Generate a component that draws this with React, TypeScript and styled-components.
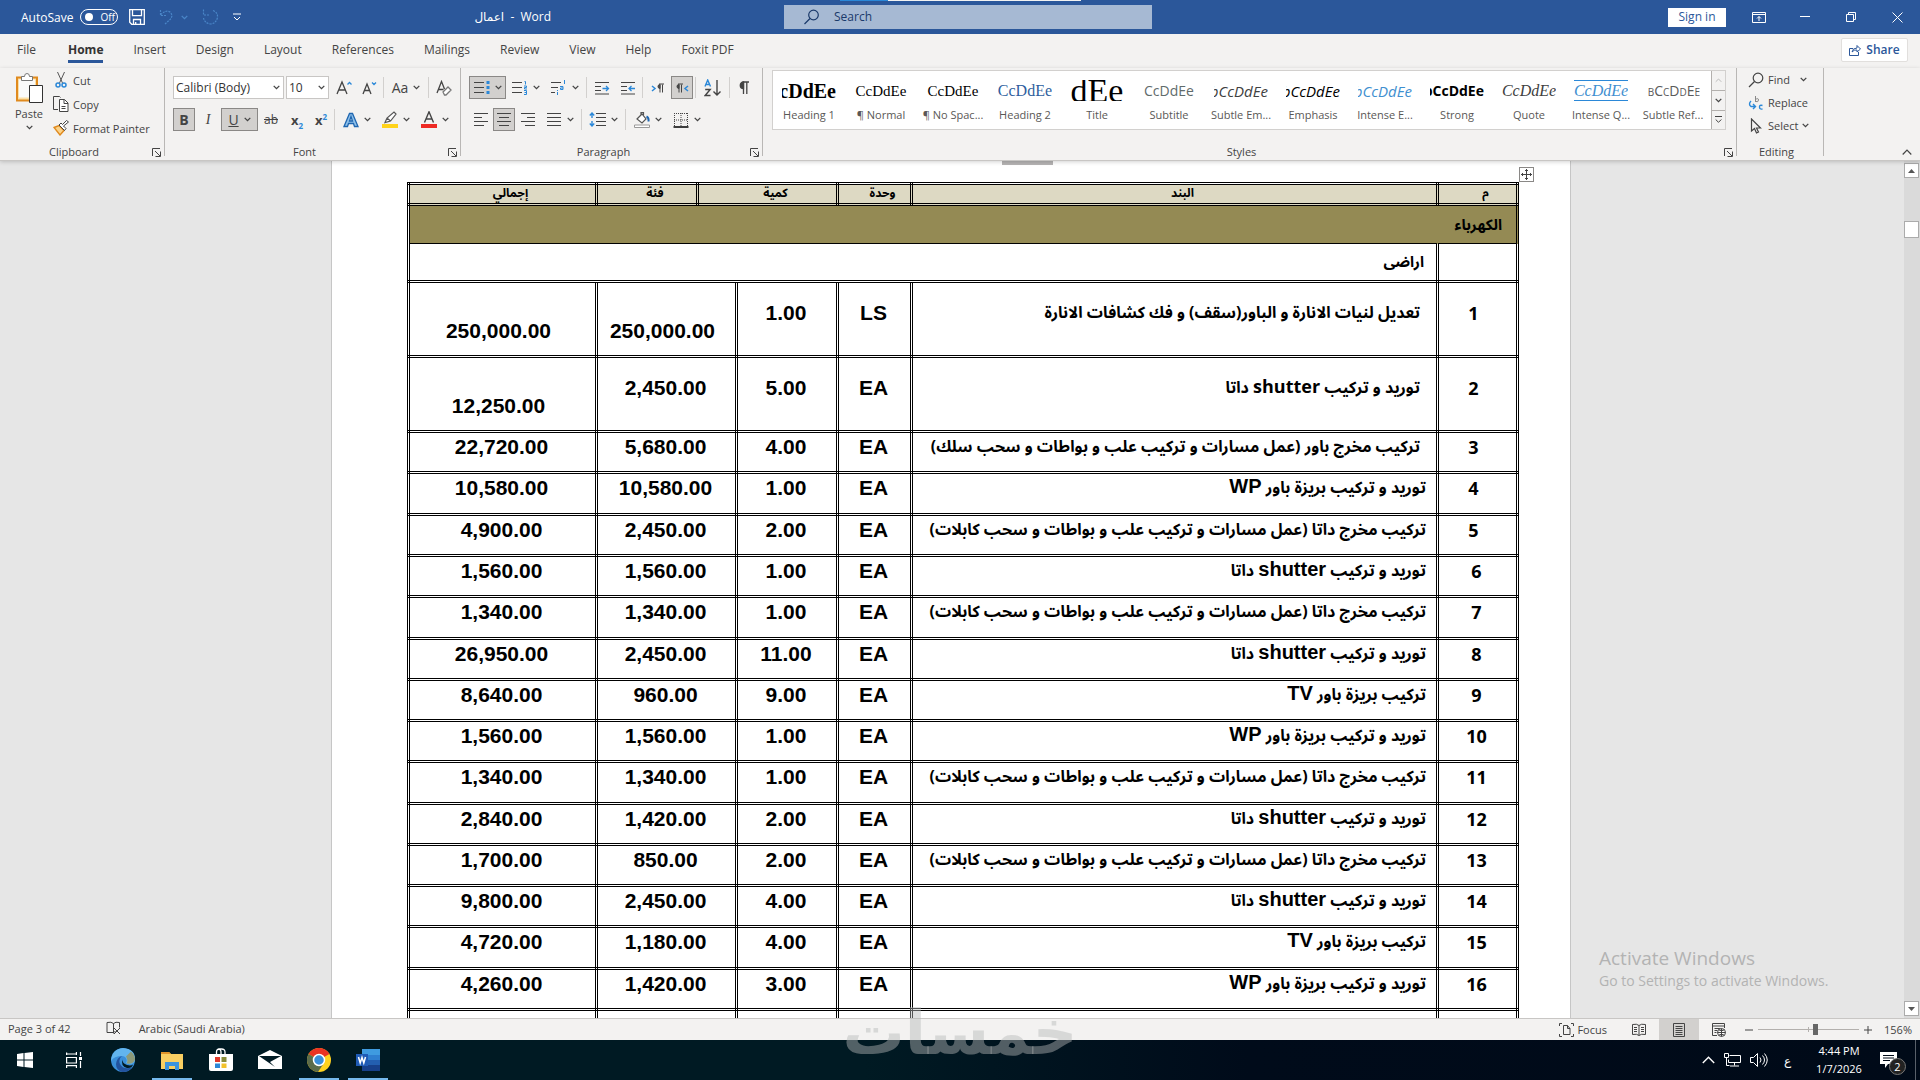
import React from 'react';
import styled, { createGlobalStyle } from 'styled-components';

const ui = '"Open Sans", "Noto Sans", "DejaVu Sans", sans-serif';
const blue = '#2b579a';
const ink = '#444444';
const accent = '#2b88d8';

const Global = createGlobalStyle`
  *, *::before, *::after { box-sizing: border-box; }
  html, body { margin: 0; height: 100%; }
  body { overflow: hidden; font-family: ${ui}; font-size: 11px; color: ${ink}; }
  button, select, input { font: inherit; color: inherit; margin: 0; }
  button { border: 0; background: none; padding: 0; }
  svg { display: block; flex: none; }
`;

const Shell = styled.div`
  position: relative;
  display: flex;
  flex-direction: column;
  height: 100vh;
  background: #f3f2f1;
`;

/* ---------- icons ---------- */
type IconProps = { w?: number; h?: number; c?: string; sw?: number; children: React.ReactNode };
const Icon = ({ w = 16, h = 16, c = ink, sw = 1, children }: IconProps) => (
  <svg width={w} height={h} viewBox={`0 0 ${w} ${h}`} fill="none" stroke={c} strokeWidth={sw} aria-hidden="true">
    {children}
  </svg>
);
const Chevron = ({ c = ink }: { c?: string }) => (
  <Icon w={7} h={5} c={c} sw={1.3}><path d="M.7.9 3.5 3.6 6.3.9" /></Icon>
);
const Launcher = () => (
  <Icon w={9} h={9}><path d="M.5 8V.5H8M3 3l5 5M8.500 3.500v5h-5" /></Icon>
);

/* ---------- title bar ---------- */
const TitleBar = styled.header`
  display: grid;
  grid-template-columns: 1fr 368px 1fr;
  align-items: center;
  flex: none;
  height: 34px;
  padding-left: 16px;
  background: ${blue};
  color: #fff;
`;
const TitleLeft = styled.div`
  display: flex;
  align-items: center;
  padding-left: 5px;
  height: 32px;
`;
const AutoSave = styled.label`
  display: flex;
  align-items: center;
  gap: 7px;
  font-size: 12px;
  margin-right: 11px;
`;
const Toggle = styled.button`
  display: flex;
  align-items: center;
  gap: 7px;
  width: 38px;
  height: 16px;
  padding-left: 4px;
  border: 1px solid #fff;
  border-radius: 8px;
  font-size: 10px;
  line-height: 14px;
  &::before { content: ''; width: 8px; height: 8px; border-radius: 4px; background: #fff; }
`;
const Quick = styled.div`
  display: flex;
  align-items: center;
  gap: 14px;
`;
const Pair = styled.button`
  display: flex;
  align-items: center;
  gap: 7px;
`;
const DocTitle = styled.h1`
  flex: 1;
  margin: 0;
  padding-bottom: 2px;
  text-align: center;
  font-size: 12px;
  font-weight: 400;
  white-space: pre;
`;
const Search = styled.label`
  display: flex;
  align-items: center;
  gap: 14px;
  height: 24px;
  padding-left: 20px;
  background: #a6b9d3;
  color: #1b3a6b;
`;
const SearchInput = styled.input`
  flex: 1;
  min-width: 0;
  border: 0;
  outline: 0;
  padding: 0 0 2px;
  background: none;
  font-size: 12px;
  &::placeholder { color: #1b3a6b; opacity: 1; }
`;
const TitleRight = styled.div`
  display: flex;
  align-items: center;
  justify-content: flex-end;
  height: 32px;
`;
const SignIn = styled.button`
  width: 58px;
  height: 19px;
  margin-right: 10px;
  background: #fff;
  color: ${blue};
  font-size: 12px;
  line-height: 18px;
`;
const WinButton = styled.button`
  display: grid;
  place-items: center;
  width: 46px;
  height: 32px;
`;
const TopEdge = styled.div`
  position: absolute;
  top: 0;
  left: 840px;
  width: 241px;
  height: 1px;
  background: linear-gradient(90deg, #2b88d8 48px, #f3f2f1 48px);
`;

/* ---------- ribbon ---------- */
const TabBar = styled.nav`
  display: flex;
  align-items: center;
  flex: none;
  height: 34px;
  padding: 0 24px 0 2px;
`;
const Tab = styled.a<{ $on?: boolean }>`
  position: relative;
  height: 32px;
  padding: 0 15px;
  line-height: 30px;
  font-size: 12px;
  color: ${(p) => (p.$on ? '#333' : ink)};
  font-weight: ${(p) => (p.$on ? 700 : 400)};
  text-decoration: none;
  &::after {
    content: '';
    position: absolute;
    left: 15px;
    right: 15px;
    bottom: 4px;
    height: 3px;
    background: ${(p) => (p.$on ? blue : 'transparent')};
  }
  &:nth-child(1) { margin-right: 2px; }
`;
const Share = styled.button`
  display: flex;
  align-items: center;
  justify-content: center;
  gap: 5px;
  width: 67px;
  height: 24px;
  margin: 0 -12px 2px auto;
  border: 1px solid #e1dfdd;
  border-radius: 2px;
  background: #fff;
  color: ${blue};
  font-size: 12px;
  font-weight: 600;
  line-height: 20px;
`;
const Ribbon = styled.div`
  position: relative;
  z-index: 1;
  display: flex;
  flex: none;
  height: 93px;
  border-bottom: 1px solid #c8c6c4;
  box-shadow: 0 1px 4px rgba(0, 0, 0, 0.18);
  background: #f3f2f1;
`;
const Group = styled.section<{ $w?: number }>`
  display: flex;
  flex-direction: column;
  flex: ${(p) => (p.$w ? `0 0 ${p.$w}px` : '1 1 0')};
  min-width: 0;
  height: 88px;
  padding-left: 8px;
  border-right: 1px solid #b9b7b5;
`;
const GroupFoot = styled.div`
  display: flex;
  align-items: center;
  height: 16px;
  margin: auto 0 -4px -8px;
  padding-right: 3px;
  font-size: 11px;
  line-height: 16px;
  & > span { flex: 1; padding-right: 4px; text-align: center; }
`;
const Rows = styled.div`
  display: grid;
  gap: 9px;
  padding-top: 8px;
`;
const Row = styled.div`
  display: flex;
  align-items: center;
  height: 23px;
`;
const Tool = styled.button<{ $w: number; $on?: boolean }>`
  display: flex;
  align-items: center;
  justify-content: center;
  gap: 5px;
  flex: none;
  width: ${(p) => p.$w}px;
  height: 23px;
  border: 1px solid ${(p) => (p.$on ? '#8a8886' : 'transparent')};
  background: ${(p) => (p.$on ? '#d2d0ce' : 'none')};
  font-size: 14px;
  line-height: 20px;
`;
const Serif = styled.i`
  font-family: "Liberation Serif", serif;
`;
const Strike = styled.s`
  font-size: 12px;
`;
const Script = styled.span`
  font-size: 13px;
  line-height: 16px;
  white-space: nowrap;
  sub, sup { font-size: 8px; color: ${accent}; font-weight: 700; line-height: 0; }
`;
const Rule = styled.span`
  flex: none;
  width: 1px;
  height: 21px;
  margin: 0 2px;
  background: #d2d0ce;
`;
const Combo = styled.label<{ $w: number }>`
  display: flex;
  align-items: center;
  width: ${(p) => p.$w}px;
  height: 23px;
  margin-right: 2px;
  padding-right: 3px;
  border: 1px solid #c8c6c4;
  background: #fff;
`;
const ComboSelect = styled.select`
  appearance: none;
  flex: 1;
  min-width: 0;
  border: 0;
  outline: 0;
  padding: 0 0 0 2px;
  background: none;
  font-size: 12px;
  color: #333;
`;
const Clip = styled.div`
  display: flex;
  gap: 3px;
`;
const PasteButton = styled.button`
  display: flex;
  flex-direction: column;
  align-items: center;
  gap: 3px;
  width: 42px;
  padding-top: 4px;
  line-height: 16px;
  font-size: 11px;
`;
const ClipList = styled.div`
  display: grid;
  grid-auto-rows: 24px;
`;
const LineTool = styled.button`
  display: flex;
  align-items: center;
  gap: 4px;
  font-size: 11px;
`;
const EditList = styled.div`
  display: grid;
  grid-auto-rows: 23px;
  justify-items: start;
  padding-left: 3px;
`;
const Gallery = styled.div`
  display: flex;
  height: 60px;
  margin: 2px 10px 0 1px;
  border: 1px solid #d2d0ce;
  background: #fff;
`;
const GalleryItems = styled.div`
  flex: 1;
  display: flex;
  min-width: 0;
  overflow: hidden;
`;
const StyleCard = styled.button`
  display: flex;
  flex-direction: column;
  align-items: center;
  flex: 0 0 72px;
  padding-top: 9px;
  overflow: hidden;
`;
type SampleProps = { $font?: string; $size?: number; $color?: string; $italic?: boolean; $bold?: boolean; $rule?: boolean; $caps?: boolean; $end?: boolean };
const Sample = styled.span<SampleProps>`
  display: flex;
  align-items: center;
  justify-content: ${(p) => (p.$end ? 'flex-end' : 'center')};
  width: 54px;
  height: 24px;
  overflow: hidden;
  white-space: nowrap;
  font-family: ${(p) => p.$font || '"Open Sans", sans-serif'};
  font-size: ${(p) => p.$size || 14}px;
  line-height: 20px;
  color: ${(p) => p.$color || '#000'};
  font-style: ${(p) => (p.$italic ? 'italic' : 'normal')};
  font-weight: ${(p) => (p.$bold ? 700 : 400)};
  font-variant: ${(p) => (p.$caps ? 'small-caps' : 'normal')};
  border: solid ${accent};
  border-width: ${(p) => (p.$rule ? '1px 0' : '0')};
`;
const StyleName = styled.span`
  font-size: 11px;
  line-height: 28px;
  white-space: nowrap;
  color: #5a5856;
`;
const GalleryScroll = styled.div`
  display: grid;
  grid-template-rows: repeat(3, 1fr);
  width: 14px;
  border-left: 1px solid #b3b0ad;
  & > button { display: grid; place-items: center; background: #f3f2f1; }
  & > button + button { border-top: 1px solid #b3b0ad; }
`;
const Tail = styled.div`
  display: flex;
  align-items: flex-end;
  justify-content: flex-end;
  width: 96px;
  padding: 0 8px 4px 0;
`;

/* ---------- document ---------- */
const Workspace = styled.main`
  display: flex;
  flex: 1 1 0;
  min-height: 0;
  overflow: hidden;
  background: #e6e6e6;
`;
const Canvas = styled.div`
  display: flex;
  justify-content: center;
  flex: 1;
  padding-right: 2px;
  overflow: hidden;
`;
const Page = styled.article`
  position: relative;
  flex: none;
  width: 1240px;
  height: max-content;
  padding: 21px 0 0 75px;
  border: solid #c6c6c6;
  border-width: 0 1px;
  background: #fff;
  color: #000;
`;
const RulerMark = styled.div`
  position: absolute;
  top: 0;
  left: 670px;
  width: 51px;
  height: 4px;
  background: #b5b3b3;
`;
const MoveHandle = styled.button`
  position: absolute;
  top: 6px;
  left: 1187px;
  display: grid;
  place-items: center;
  width: 15px;
  height: 15px;
  border: 1px solid #8a8886;
  background: #fff;
`;
const Sheet = styled.table`
  width: 1111px;
  table-layout: fixed;
  border-collapse: collapse;
  border: 3px double #000;
`;
const arial = '"Liberation Sans", "DejaVu Sans", sans-serif';
const calibri = '"Noto Sans Arabic", "Open Sans", "DejaVu Sans", sans-serif';
const Th = styled.th`
  height: 21px;
  padding: 0 0 0 16px;
  border: 3px double #000;
  background: #ddd9c3;
  font: 700 12px/18px ${calibri};
`;
const Section = styled.td`
  height: 39px;
  padding: 0 14px;
  border: 3px double #000;
  border-bottom: 1px solid #000;
  background: #948a54;
  font: 700 15px/24px ${calibri};
`;
const Sub = styled.td`
  height: 38px;
  padding: 0 12px;
  border: 3px double #000;
  border-top: 1px solid #000;
  font: 700 15px/24px ${calibri};
`;
const Line = styled.tr<{ $h: number }>`
  height: ${(p) => p.$h}px;
`;
const Cell = styled.td<{ $tall?: boolean; $low?: boolean; $trail?: boolean }>`
  padding: ${(p) => (p.$low ? 36 : p.$tall ? 18 : 2)}px ${(p) => (p.$low || p.$trail ? 8 : 2)}px 0 0;
  border: 3px double #000;
  vertical-align: top;
  text-align: center;
  font: 700 21px/24px ${arial};
`;
const NoCell = styled(Cell)`
  font: 700 18px/24px "Open Sans", sans-serif;
`;
const Item = styled(Cell)<{ $soft?: boolean }>`
  padding-right: ${(p) => (p.$soft ? 16 : 10)}px;
  text-align: right;
  white-space: nowrap;
  font: 700 16px/24px ${calibri};
  & > bdi {
    font-family: ${(p) => (p.$soft ? calibri : arial)};
    font-size: ${(p) => (p.$soft ? 18 : 20)}px;
    line-height: 20px;
  }
`;
const ScrollTrack = styled.div`
  display: flex;
  flex-direction: column;
  flex: none;
  width: 16px;
  padding: 2px 1px 2px 0;
  background: #dadada;
`;
const ScrollButton = styled.button`
  display: grid;
  place-items: center;
  width: 15px;
  height: 15px;
  border: 1px solid #ababab;
  background: #fff;
`;
const ScrollThumb = styled.div`
  width: 15px;
  height: 17px;
  margin: 43px 0 auto;
  border: 1px solid #ababab;
  background: #fff;
`;

/* ---------- status bar ---------- */
const Status = styled.footer`
  display: flex;
  align-items: center;
  flex: none;
  height: 22px;
  padding: 0 8px;
  border-top: 1px solid #c8c6c4;
  background: #f3f2f1;
  font-size: 11px;
  line-height: 18px;
`;
const StatusLeft = styled.div`
  display: flex;
  align-items: center;
  gap: 17px;
  padding-bottom: 2px;
  & > span:first-child { margin-right: 18px; }
`;
const StatusRight = styled.div`
  display: flex;
  align-items: center;
  margin-left: auto;
`;
const View = styled.button<{ $on?: boolean }>`
  display: grid;
  place-items: center;
  width: 40px;
  height: 21px;
  background: ${(p) => (p.$on ? '#d2d0ce' : 'none')};
`;
const Focus = styled.button`
  display: flex;
  align-items: center;
  gap: 3px;
  margin-right: 12px;
`;
const Zoom = styled.input`
  appearance: none;
  width: 101px;
  height: 12px;
  margin: 0 5px;
  background: linear-gradient(#b3b0ad, #b3b0ad) center / 100% 1px no-repeat,
    linear-gradient(#b3b0ad, #b3b0ad) center / 1px 5px no-repeat;
  &::-webkit-slider-thumb { appearance: none; width: 5px; height: 11px; background: #666; }
`;
const Percent = styled.span`
  width: 40px;
  text-align: right;
`;

/* ---------- taskbar ---------- */
const Taskbar = styled.footer`
  display: flex;
  flex: none;
  height: 40px;
  background: linear-gradient(90deg, #001a23 0%, #001a23 45%, #000b1a 65%, #000a18 100%);
  color: #fff;
`;
const TaskButton = styled.button<{ $open?: boolean }>`
  display: grid;
  place-items: center;
  width: 49px;
  height: 40px;
  background: ${(p) => (p.$open ? 'linear-gradient(#76b9ed, #76b9ed) center bottom / 40px 2px no-repeat' : 'none')};
`;
const Tray = styled.div`
  display: flex;
  align-items: center;
  gap: 9px;
  margin-left: auto;
`;
const Lang = styled.span`
  width: 21px;
  text-align: center;
  font-size: 12px;
`;
const Clock = styled.time`
  width: 64px;
  text-align: center;
  font-size: 11px;
  line-height: 18px;
`;
const Badge = styled.button`
  position: relative;
  width: 26px;
  height: 24px;
`;
const Count = styled.span`
  position: absolute;
  right: 0;
  bottom: -3px;
  width: 17px;
  height: 17px;
  border: 1px solid #777;
  border-radius: 9px;
  background: #222;
  font-size: 11px;
  line-height: 15px;
`;
const DesktopEdge = styled.span`
  width: 5px;
  height: 40px;
  border-left: 1px solid #59606a;
`;

/* ---------- overlays ---------- */
const Activate = styled.aside`
  position: absolute;
  right: 85px;
  bottom: 89px;
  z-index: 2;
  width: 236px;
  color: #b3b3b3;
  white-space: nowrap;
  font-size: 14px;
  line-height: 20px;
`;
const ActivateTitle = styled.div`
  font-size: 19px;
  line-height: 26px;
`;
const Watermark = styled.div`
  position: absolute;
  left: 50%;
  bottom: 16px;
  z-index: 3;
  transform: translateX(-50%);
  font: 700 62px/62px "DejaVu Sans", sans-serif;
  color: rgba(182, 184, 184, 0.45);
`;

/* ---------- data ---------- */
const wp = 'توريد و تركيب بريزة باور WP';
const data = 'تركيب مخرج داتا (عمل مسارات و تركيب علب و بواطات و سحب كابلات)';
const shutter = 'توريد و تركيب shutter داتا';
const tv = 'تركيب بريزة باور TV';
const rows: [string, string, string, string, string][] = [
  ['تعديل لنيات الانارة و الباور(سقف) و فك كشافات الانارة', 'LS', '1.00', '250,000.00', '250,000.00'],
  [shutter, 'EA', '5.00', '2,450.00', '12,250.00'],
  ['تركيب مخرج باور (عمل مسارات و تركيب علب و بواطات و سحب سلك)', 'EA', '4.00', '5,680.00', '22,720.00'],
  [wp, 'EA', '1.00', '10,580.00', '10,580.00'],
  [data, 'EA', '2.00', '2,450.00', '4,900.00'],
  [shutter, 'EA', '1.00', '1,560.00', '1,560.00'],
  [data, 'EA', '1.00', '1,340.00', '1,340.00'],
  [shutter, 'EA', '11.00', '2,450.00', '26,950.00'],
  [tv, 'EA', '9.00', '960.00', '8,640.00'],
  [wp, 'EA', '1.00', '1,560.00', '1,560.00'],
  [data, 'EA', '1.00', '1,340.00', '1,340.00'],
  [shutter, 'EA', '2.00', '1,420.00', '2,840.00'],
  [data, 'EA', '2.00', '850.00', '1,700.00'],
  [shutter, 'EA', '4.00', '2,450.00', '9,800.00'],
  [tv, 'EA', '4.00', '1,180.00', '4,720.00'],
  [wp, 'EA', '3.00', '1,420.00', '4,260.00'],
  [data, 'EA', '3.00', '850.00', '2,550.00'],
];
const rowHeight = (n: number) => (n < 3 ? 75 : [4, 7, 11, 15].includes(n) ? 42 : 41);

/* Latin words inside an Arabic line are set larger than the Arabic around them */
const mixed = (text: string) => text.split(/([A-Za-z]+)/).map((part, i) => (i % 2 ? <bdi key={i}>{part}</bdi> : part));

const serif = '"Liberation Serif", serif';
const styleCards: [string, string, SampleProps][] = [
  ['Heading 1', 'CcDdEe', { $font: serif, $size: 20, $bold: true, $end: true }],
  ['¶ Normal', 'CcDdEe', { $font: serif, $size: 15 }],
  ['¶ No Spac...', 'CcDdEe', { $font: serif, $size: 15 }],
  ['Heading 2', 'CcDdEe', { $font: serif, $size: 16, $color: '#2f5f9e', $end: true }],
  ['Title', 'dEe', { $font: serif, $size: 34 }],
  ['Subtitle', 'CcDdEe', { $color: '#5f6b6b' }],
  ['Subtle Em...', 'bCcDdEe', { $size: 15, $italic: true, $color: '#404040', $end: true }],
  ['Emphasis', 'bCcDdEe', { $size: 15, $italic: true, $end: true }],
  ['Intense E...', 'bCcDdEe', { $size: 15, $italic: true, $color: '#3f8fd0', $end: true }],
  ['Strong', 'bCcDdEe', { $size: 14, $bold: true, $end: true }],
  ['Quote', 'CcDdEe', { $font: serif, $size: 16, $italic: true, $color: '#404040' }],
  ['Intense Q...', 'CcDdEe', { $font: serif, $size: 16, $italic: true, $color: '#3f8fd0', $rule: true }],
  ['Subtle Ref...', 'bCcDdEe', { $size: 14, $caps: true, $color: '#5a5a5a', $end: true }],
];

const lines = (a: [number, number][]) => a.map(([x1, x2], i) => <path key={i} d={`M${x1} ${1.5 + i * 4}H${x2}`} />);

const ClipboardGroup = () => (
  <Group $w={165}>
    <Clip>
      <PasteButton>
        <Icon w={28} h={31}>
          <path d="M2 5.500h20v23H2z" fill="#fbe0a6" stroke="#e08a1e" strokeWidth="2" />
          <path d="M4 7.500h16v18H4z" fill="#fafafa" stroke="none" />
          <path d="M6.500 8.500v-4h3q0-3 2.500-3t2.500 3h3v4z" fill="#fff" stroke="#777" />
          <path d="M14.500 13.500h13v17h-13z" fill="#fff" stroke="#333" />
        </Icon>
        Paste
        <Chevron />
      </PasteButton>
      <ClipList>
        <LineTool>
          <Icon><path d="M4.500 0l5 11M11.500 0l-5 11" stroke="#555" /><circle cx="5" cy="13" r="2" stroke={accent} strokeWidth="1.500" /><circle cx="11" cy="13" r="2" stroke={accent} strokeWidth="1.500" /></Icon>
          Cut
        </LineTool>
        <LineTool>
          <Icon><path d="M5 13.500H.5V.5h6l1 1" /><path d="M6.500 3.500h5l3.500 3.500v8.500H6.500z" fill="#fff" /><path d="M11 3.500V7.500h4M8.500 10.500h4M8.500 12.500h4" /></Icon>
          Copy
        </LineTool>
        <LineTool>
          <Icon><path d="M1 7.500l5-2 5 5-4 4.500z" fill="#fbd38a" stroke="#e08a1e" strokeWidth="1.400" /><path d="M6 5l5.500 5.500 1.500-2L10.500 6 15.500 2 13.500.5 9.500 4.500 8 3z" fill="#fff" stroke="#444" /></Icon>
          Format Painter
        </LineTool>
      </ClipList>
    </Clip>
    <GroupFoot><span>Clipboard</span><button aria-label="Clipboard settings"><Launcher /></button></GroupFoot>
  </Group>
);

const FontGroup = () => (
  <Group $w={296}>
    <Rows>
      <Row>
        <Combo $w={111}><ComboSelect aria-label="Font"><option>Calibri (Body)</option></ComboSelect><Chevron /></Combo>
        <Combo $w={43}><ComboSelect aria-label="Font size"><option>10</option></ComboSelect><Chevron /></Combo>
        <Tool $w={25} aria-label="Grow font"><Icon sw={1.3}><path d="M1 14 6 2l5 12M2.700 10h6.600" /><path d="M11.500 4.500l2-2 2 2" stroke={accent} /></Icon></Tool>
        <Tool $w={25} aria-label="Shrink font"><Icon sw={1.3}><path d="M2 14 6 4l4 10M3.500 10.500h5" /><path d="M11 2.500l2 2 2-2" stroke={accent} /></Icon></Tool>
        <Rule />
        <Tool $w={40}>Aa<Chevron /></Tool>
        <Rule />
        <Tool $w={26} aria-label="Clear formatting"><Icon sw={1.3}><path d="M1 13 5.500 1.500 8.500 9M2.500 9.500h5" /><path d="M7 12l5-5 3 3-5 5H8.500z" stroke="#777" fill="#fff" /></Icon></Tool>
      </Row>
      <Row>
        <Tool $w={22} $on><b>B</b></Tool>
        <Tool $w={26}><Serif>I</Serif></Tool>
        <Tool $w={37} $on><u>U</u><Chevron /></Tool>
        <Tool $w={26}><Strike>ab</Strike></Tool>
        <Tool $w={26}><Script><b>x</b><sub>2</sub></Script></Tool>
        <Tool $w={22}><Script><b>x</b><sup>2</sup></Script></Tool>
        <Rule />
        <Tool $w={39} aria-label="Text effects"><Icon sw={1}><path d="M1 14.500 6.500 1.500h3L15 14.500h-3.500l-1-3h-5l-1 3zM6.500 9h3L8 4.500z" fill="#8fc1ea" stroke="#1f66b0" strokeWidth="1.300" /></Icon><Chevron /></Tool>
        <Tool $w={39} aria-label="Highlight"><Icon w={16} h={18}><path d="M3 11.500 5 7l7-6 2 2-5.500 7zM5 7l3.500 3" fill="#fff" stroke="#555" strokeWidth="1.200" /><path d="M0 15h16" stroke="#ffd31a" strokeWidth="4" /></Icon><Chevron /></Tool>
        <Tool $w={39} aria-label="Font color"><Icon w={16} h={18} sw={1.4}><path d="M3.500 11.500 8 .8l4.500 10.700M5 8h6" /><path d="M0 15h16" stroke="#ee2a24" strokeWidth="4" /></Icon><Chevron /></Tool>
      </Row>
    </Rows>
    <GroupFoot><span>Font</span><button aria-label="Font settings"><Launcher /></button></GroupFoot>
  </Group>
);

const ParagraphGroup = () => (
  <Group $w={302}>
    <Rows>
      <Row>
        <Tool $w={37} $on aria-label="Bullets"><Icon h={15}><path d="M0 2.500h10M0 7.500h10M0 12.500h10" /><path d="M12.500 2.500h3M12.500 7.500h3M12.500 12.500h3" stroke={accent} strokeWidth="3" /></Icon><Chevron /></Tool>
        <Tool $w={39} aria-label="Numbering"><Icon h={15}><path d="M0 2.500h10M0 7.500h10M0 12.500h10" /><path d="M12.500 1.500h1v3M12 6h2.500v1.500H12.500V9H15M12 10.500h2.500v4H12M12.500 12.500h2" stroke={accent} /></Icon><Chevron /></Tool>
        <Tool $w={39} aria-label="Multilevel list"><Icon h={15}><path d="M0 2.500h10M0 7.500h7M0 12.500h4" /><path d="M13.500 0v4M9 6.500h3v3H9.500V8H12M6.500 10v1M6.500 12v3" stroke={accent} /></Icon><Chevron /></Tool>
        <Rule />
        <Tool $w={26} aria-label="Decrease indent"><Icon h={14}><path d="M1 1.500h14M1 5.500h6M1 9.500h6M1 13h14" /><path d="M8.500 7.500h6M12 5l2.500 2.500L12 10" stroke={accent} strokeWidth="1.300" /></Icon></Tool>
        <Tool $w={25} aria-label="Increase indent"><Icon h={14}><path d="M1 1.500h14M1 5.500h6M1 9.500h6M1 13h14" /><path d="M9 7.500h6M11.500 5 9 7.500 11.500 10" stroke={accent} strokeWidth="1.300" /></Icon></Tool>
        <Rule />
        <Tool $w={26} aria-label="Left to right"><Icon h={12}><path d="M2 4l3 2.500L2 9" stroke={accent} strokeWidth="1.500" /><path d="M10 2.500v8M12.500 2.500v8M9 2h5" /><path d="M10 2.500a2 2 0 000 4z" fill={ink} /></Icon></Tool>
        <Tool $w={22} $on aria-label="Right to left"><Icon h={12}><path d="M14 4l-3 2.500L14 9" stroke={accent} strokeWidth="1.500" /><path d="M5 2.500v8M7.500 2.500v8M4 2h5" /><path d="M5 2.500a2 2 0 000 4z" fill={ink} /></Icon></Tool>
        <Rule />
        <Tool $w={29} aria-label="Sort"><Icon w={17} h={18} sw={1.4}><path d="M1 7.500 3.700 1l2.800 6.500M2 5.500h3.500" stroke={accent} /><path d="M1.200 10.500h5l-5 6h5.300M13 1v15M9.500 12.500 13 16l3.500-3.500" /></Icon></Tool>
        <Rule />
        <Tool $w={24} aria-label="Show marks"><Icon w={11} h={14} sw={1.3}><path d="M4.500 1v12M7.800 1v12M3.500 1H10" /><path d="M4.500 1a3 3 0 000 6.500z" fill={ink} /></Icon></Tool>
      </Row>
      <Row>
        <Tool $w={24} aria-label="Align left"><Icon h={15}>{lines([[1, 15], [1, 9], [1, 15], [1, 11]])}</Icon></Tool>
        <Tool $w={22} $on aria-label="Center"><Icon h={15}>{lines([[1, 15], [3, 13], [1, 15], [3, 13]])}</Icon></Tool>
        <Tool $w={26} aria-label="Align right"><Icon h={15}>{lines([[1, 15], [7, 15], [1, 15], [5, 15]])}</Icon></Tool>
        <Tool $w={38} aria-label="Justify"><Icon h={15}>{lines([[1, 15], [1, 15], [1, 15], [1, 15]])}</Icon><Chevron /></Tool>
        <Rule />
        <Tool $w={39} aria-label="Line spacing"><Icon w={17} h={15}><path d="M7 1.500h10M7 5.500h10M7 9.500h10M7 13.500h10" /><path d="M3 1v5M3 9v5M.8 3.500 3 1l2.200 2.500M.8 11.500 3 14l2.200-2.500" stroke={accent} strokeWidth="1.400" /></Icon><Chevron /></Tool>
        <Rule />
        <Tool $w={39} aria-label="Shading"><Icon><path d="M3 7l5-5 4 5-4 4zM7 4V.5h2.500V3" fill="#fff" stroke="#555" strokeWidth="1.200" /><path d="M12.500 4.500q2.500 1 2 5" stroke="#1f66b0" strokeWidth="2" /><path d="M.5 13h15v2.500H.5z" fill="#fff" stroke="#999" /></Icon><Chevron /></Tool>
        <Tool $w={39} aria-label="Borders"><Icon><path d="M1 1.500h14M1 8h14M1.500 1v14M8 1v14M14.500 1v14" strokeDasharray="1 1" /><path d="M.5 15h15" stroke="#000" strokeWidth="1.500" /></Icon><Chevron /></Tool>
      </Row>
    </Rows>
    <GroupFoot><span>Paragraph</span><button aria-label="Paragraph settings"><Launcher /></button></GroupFoot>
  </Group>
);

const StylesGroup = () => (
  <Group>
    <Gallery>
      <GalleryItems>
        {styleCards.map(([name, text, look]) => (
          <StyleCard key={name}>
            <Sample {...look}>{text}</Sample>
            <StyleName>{name}</StyleName>
          </StyleCard>
        ))}
      </GalleryItems>
      <GalleryScroll>
        <button aria-label="Scroll up"><Icon w={7} h={5} c="#bbb"><path d="M.7 3.800 3.500 1l2.800 2.800" /></Icon></button>
        <button aria-label="Scroll down"><Chevron /></button>
        <button aria-label="More styles"><Icon w={7} h={9}><path d="M0 1.500h7M.7 4.500 3.500 7.300l2.800-2.800" /></Icon></button>
      </GalleryScroll>
    </Gallery>
    <GroupFoot><span>Styles</span><button aria-label="Styles settings"><Launcher /></button></GroupFoot>
  </Group>
);

const EditingGroup = () => (
  <Group $w={87}>
    <EditList>
      <LineTool><Icon><circle cx="10" cy="6" r="4.800" strokeWidth="1.200" /><path d="M6.500 9.500 1 15" strokeWidth="1.200" /></Icon>Find &nbsp;<Chevron /></LineTool>
      <LineTool><Icon><path d="M7.500 1v6M7.500 4.500q3-2 3 .5t-3 1.500" stroke="#888" /><path d="M3 6q-3 3 0 5.500h4M5 9l2.500 2.500L5 14M14.500 10.500q-3-1-3 1.500t3 2" stroke={accent} strokeWidth="1.400" /></Icon>Replace</LineTool>
      <LineTool><Icon><path d="M3.500 1v12l3-2.500 2 4.500 2-1-2-4h4z" strokeWidth="1.200" /></Icon>Select<Chevron /></LineTool>
    </EditList>
    <GroupFoot><span>Editing</span></GroupFoot>
  </Group>
);

const tabs = ['File', 'Home', 'Insert', 'Design', 'Layout', 'References', 'Mailings', 'Review', 'View', 'Help', 'Foxit PDF'];

export default function App() {
  return (
    <Shell>
      <Global />
      <TitleBar>
        <TitleLeft>
          <AutoSave htmlFor="autosave">AutoSave<Toggle id="autosave">Off</Toggle></AutoSave>
          <Quick>
            <button aria-label="Save"><Icon c="#fff" sw={1.3}><path d="M.7.7h14.600v14.600H2.700l-2-2zM3.500.7v6h9v-6M4.500 15v-4.500h7V15M6.700 13v2" /></Icon></button>
            <Pair aria-label="Undo"><Icon w={15} h={16} c="#4a86c8" sw={1.2}><path d="M1.500 1v5.500H7M1.500 6q5-5.500 9.500-3 4 4-.5 8L6 15" strokeDasharray="2 1" /></Icon><Chevron c="#4a86c8" /></Pair>
            <button aria-label="Redo"><Icon w={17} c="#4a86c8" sw={1.2}><path d="M1.500.5V6H7M11 1.500q5 2 4.500 7-1.500 6-7 6.500-6-1-7-6" strokeDasharray="2 1" /></Icon></button>
            <button aria-label="Customize toolbar"><Icon w={8} h={8} c="#fff"><path d="M0 1h8M1 4l3 3 3-3" /></Icon></button>
          </Quick>
          <DocTitle><bdi>اعمال</bdi>{'  -  Word'}</DocTitle>
        </TitleLeft>
        <Search>
          <Icon c="#1b3a6b" sw={1.2}><circle cx="9.500" cy="6" r="4.800" /><path d="M6 9.500.5 15" /></Icon>
          <SearchInput placeholder="Search" aria-label="Search" />
        </Search>
        <TitleRight>
          <SignIn>Sign in</SignIn>
          <WinButton aria-label="Ribbon display"><Icon w={14} h={11} c="#fff"><path d="M.5.5h13v10H.5zM.5 2.500h13M7 9V4.500M5 6.500l2-2 2 2" /></Icon></WinButton>
          <WinButton aria-label="Minimize"><Icon w={10} h={10} c="#fff"><path d="M0 4.500h10" /></Icon></WinButton>
          <WinButton aria-label="Restore"><Icon w={10} h={10} c="#fff"><path d="M.5 2.500h7v7h-7zM2.500 2.500v-2h7v7h-2" /></Icon></WinButton>
          <WinButton aria-label="Close"><Icon w={11} h={11} c="#fff"><path d="M.5.5l10 10M10.500.5l-10 10" /></Icon></WinButton>
        </TitleRight>
      </TitleBar>
      <TopEdge />
      <TabBar>
        {tabs.map((t) => <Tab key={t} href="#" $on={t === 'Home'}>{t}</Tab>)}
        <Share><Icon w={12} h={12} c={blue}><path d="M4 4.500H.5v7h9V8M3 8q.5-4 5-4V1.500L11.500 5 8 8V6Q5 5.500 3 8z" /></Icon>Share</Share>
      </TabBar>
      <Ribbon>
        <ClipboardGroup />
        <FontGroup />
        <ParagraphGroup />
        <StylesGroup />
        <EditingGroup />
        <Tail><button aria-label="Collapse ribbon"><Icon w={10} h={7}><path d="M.7 5.500 5 1.200l4.300 4.300" strokeWidth="1.200" /></Icon></button></Tail>
      </Ribbon>
      <Workspace>
        <Canvas>
          <Page>
            <RulerMark />
            <MoveHandle aria-label="Move table"><Icon w={11} h={11}><path d="M5.500 0v11M0 5.500h11M4 2l1.500-1.500L7 2M4 9l1.500 1.500L7 9M2 4 .5 5.500 2 7M9 4l1.500 1.500L9 7" /></Icon></MoveHandle>
            <Sheet dir="rtl">
              <colgroup>
                {[80, 526, 74, 101, 39, 101, 188].map((w, i) => <col key={i} width={w} />)}
              </colgroup>
              <thead>
                <tr><Th>م</Th><Th>البند</Th><Th>وحدة</Th><Th colSpan={2}>كمية</Th><Th>فئة</Th><Th>إجمالي</Th></tr>
              </thead>
              <tbody>
                <tr><Section colSpan={7}>الكهرباء</Section></tr>
                <tr><Sub /><Sub colSpan={6}>اراضى</Sub></tr>
                {rows.map(([item, unit, qty, rate, total], i) => {
                  const n = i + 1;
                  const tall = n < 3;
                  return (
                    <Line key={n} $h={rowHeight(n)}>
                      <NoCell $tall={tall} $trail={n < 6}>{n}</NoCell>
                      <Item $tall={tall} $soft={n < 4}>{mixed(item)}</Item>
                      <Cell $tall={tall}>{unit}</Cell>
                      <Cell $tall={tall}>{qty}</Cell>
                      <Cell $tall={tall} $low={n === 1} colSpan={2}>{rate}</Cell>
                      <Cell $tall={tall} $low={tall}>{total}</Cell>
                    </Line>
                  );
                })}
              </tbody>
            </Sheet>
          </Page>
        </Canvas>
        <ScrollTrack>
          <ScrollButton aria-label="Scroll up"><Icon w={7} h={4}><path d="M0 4 3.500 0 7 4z" fill="#555" stroke="none" /></Icon></ScrollButton>
          <ScrollThumb />
          <ScrollButton aria-label="Scroll down"><Icon w={7} h={4}><path d="M0 0l3.500 4L7 0z" fill="#555" stroke="none" /></Icon></ScrollButton>
        </ScrollTrack>
      </Workspace>
      <Status>
        <StatusLeft>
          <span>Page 3 of 42</span>
          <Icon><path d="M7.500 12.500v-10q-2-2-6.500-1v10h6.500q1-1 2-1M7.500 2.500q2-2 6-1v5M8 7l6 6M14 7l-6 6" /></Icon>
          <span>Arabic (Saudi Arabia)</span>
        </StatusLeft>
        <StatusRight>
          <Focus><Icon w={15} h={14}><path d="M3 .5H.5V3M12 .5h2.500V3M.5 11v2.500H3M14.500 11v2.500H12M4.500 2.500h4l2.500 3v6H4.500zM8.500 2.500v3H11" /></Icon>Focus</Focus>
          <View aria-label="Read mode"><Icon w={14} h={13}><path d="M7 2.500q-2-2-6.500-1v10q4.500-1 6.500 1 2-2 6.500-1v-10q-4.500-1-6.500 1zM7 2.500v10M2 4.500h3M2 6.500h3M2 8.500h3M9 4.500h3M9 6.500h3M9 8.500h3" /></Icon></View>
          <View $on aria-label="Print layout"><Icon w={12} h={14}><path d="M.5.5h11v13H.5zM2.500 3.500h7M2.500 5.500h7M2.500 7.500h7M2.500 9.500h7M2.500 11.500h7" /></Icon></View>
          <View aria-label="Web layout"><Icon w={14} h={14}><path d="M5 12.500H.5V.5h12V5M.5 3h12M2.500 5.500h6M2.500 7.500h3M2.500 9.500h2" /><circle cx="9.500" cy="9.500" r="4" fill="#fff" /><path d="M5.500 9.500h8M9.500 5.500v8M7 7q2.500 1.500 5 0M7 12q2.500-1.500 5 0" /></Icon></View>
          <button aria-label="Zoom out"><Icon w={14} h={12}><path d="M6 6h8" /></Icon></button>
          <Zoom type="range" aria-label="Zoom" min={0} max={100} defaultValue={57} />
          <button aria-label="Zoom in"><Icon w={8} h={8}><path d="M0 4h8M4 0v8" /></Icon></button>
          <Percent>156%</Percent>
        </StatusRight>
      </Status>
      <Taskbar>
        <TaskButton aria-label="Start"><Icon><path d="M0 2l6.500-1v6.500H0zM7.500 1 16 0v7.500H7.500zM0 8.500h6.500V15L0 14zM7.500 8.500H16V16l-8.500-1z" fill="#fff" stroke="none" /></Icon></TaskButton>
        <TaskButton aria-label="Task view"><Icon c="#fff" sw={1.2}><path d="M.6 3V.6M.6 2h9.800M10.400 0v3M.6 5.500h9.800v5.500H.6zM.6 16v-2.400h9.800V16M14.500 0v4M14.500 9v7" /><path d="M13 5h3v3h-3z" fill="#fff" stroke="none" /></Icon></TaskButton>
        <TaskButton aria-label="Edge"><Icon w={24} h={24}><circle cx="12" cy="12" r="12" fill="#3a8fd9" stroke="none" /><path d="M12 0q12 1 12 11c0 6-7 6-9 4 2-3 0-7-4-7Q3 8 0 13 1 1 12 0z" fill="#62b5ee" stroke="none" /><path d="M20 3.500q4 4 4 8-1 5-8.500 4 2-3-.5-7z" fill="#8d9a78" stroke="none" /><path d="M11 8q-4 3-2 8 3 6 12 3.500-4 5-10 4.500-6-2-6-8Q6 9 11 8z" fill="#23539e" stroke="none" /><path d="M12 10q-2 5 4 7 4 1 6-.5-1 4-6 3.500Q9 18 12 10z" fill="#001a23" stroke="none" /></Icon></TaskButton>
        <TaskButton $open aria-label="File Explorer"><Icon w={22} h={19}><path d="M0 1h8l2 2h12v15H0z" fill="#f9cf62" stroke="none" /><path d="M0 1h8l2 2H0z" fill="#e0952a" stroke="none" /><path d="M4 19v-8h14v8h-4v-4H8v4z" fill="#3b93dd" stroke="none" /></Icon></TaskButton>
        <TaskButton aria-label="Store"><Icon w={24} h={24}><path d="M7.500 7V4q0-3 3-3M12 7V4q0-3-3-3M16 7V4q0-3-3.500-3H10" stroke="#fff" strokeWidth="1.300" /><path d="M0 6h24v15q0 2-2 2H2q-2 0-2-2z" fill="#fff" stroke="none" /><path d="M6 9h5v5H6z" fill="#e0392b" stroke="none" /><path d="M12.500 9h5v5h-5z" fill="#8a8d3a" stroke="none" /><path d="M6 15.500h5v4.500H6z" fill="#2b88d8" stroke="none" /><path d="M12.500 15.500h5v4.500h-5z" fill="#f3c22b" stroke="none" /></Icon></TaskButton>
        <TaskButton aria-label="Mail"><Icon w={24} h={20}><path d="M0 6 12 0l12 6v13H0z" fill="#fff" stroke="none" /><path d="M1 6h22l-11 6 5 5L1 6z" fill="#001a23" stroke="none" /></Icon></TaskButton>
        <TaskButton $open aria-label="Chrome"><Icon w={24} h={24}><circle cx="12" cy="12" r="12" fill="#ffd21f" stroke="none" /><path d="M12 12 1.600 6A12 12 0 0122.400 6z" fill="#ea3323" stroke="none" /><path d="M12 12 1.600 6A12 12 0 0011 24l6-9z" fill="#5b6b4a" stroke="none" /><circle cx="12" cy="12" r="5.500" fill="#3a8fd9" stroke="#fff" strokeWidth="1.500" /></Icon></TaskButton>
        <TaskButton $open aria-label="Word"><Icon w={24} h={22}><path d="M6 0h18v6H6z" fill="#3f9be0" stroke="none" /><path d="M6 6h18v5H6z" fill="#2f7fd0" stroke="none" /><path d="M6 11h18v5H6z" fill="#235fb0" stroke="none" /><path d="M6 16h18v6H6z" fill="#17408a" stroke="none" /><path d="M0 5h12v12H0z" fill="#1f5bb5" stroke="none" /><path d="M2.500 8l1.700 6L6 8.500 7.800 14l1.700-6" stroke="#fff" strokeWidth="1.500" /></Icon></TaskButton>
        <Tray>
          <Icon w={13} h={8} c="#fff" sw={1.4}><path d="M.8 7 6.500 1.300 12.200 7" /></Icon>
          <Icon w={17} h={14} c="#fff"><path d="M5.500 2.500h11v7h-12v-3M10.500 9.500v3M6 13h9M.5.5h4v4h-4zM2.500 4.500v8h3" /></Icon>
          <Icon w={18} h={14} c="#fff"><path d="M.5 4.500h3l4-4v13l-4-4h-3zM10 4.500q2 2.500 0 5M12.500 2.500q4 4.500 0 9M14.500.5q5.500 6.500 0 13" /></Icon>
          <Lang>ع</Lang>
          <Clock>4:44 PM<br />1/7/2026</Clock>
          <Badge aria-label="Notifications"><Icon w={18} h={18}><path d="M0 1h17v12h-9l-3 4v-4H0z" fill="#fff" stroke="none" /><path d="M3 4.500h11M3 7h11M3 9.500h7" stroke="#000a18" /></Icon><Count>2</Count></Badge>
          <DesktopEdge />
        </Tray>
      </Taskbar>
      <Activate><ActivateTitle>Activate Windows</ActivateTitle>Go to Settings to activate Windows.</Activate>
      <Watermark>خمسات</Watermark>
    </Shell>
  );
}
